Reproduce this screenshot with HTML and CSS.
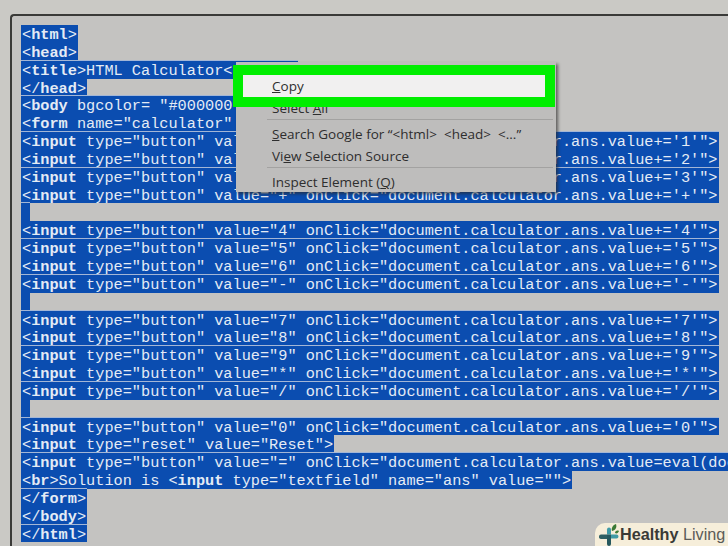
FILE: index.html
```html
<!DOCTYPE html>
<html lang="en">
<head>
<meta charset="utf-8">
<title>HTML Calculator source</title>
<link rel="stylesheet" href="styles.css">
</head>
<body>
<div class="frame">
<div class="code">
<div class="line"><span class="sel">&lt;<b>html</b>&gt;</span></div>
<div class="line"><span class="sel">&lt;<b>head</b>&gt;</span></div>
<div class="line seam"><span class="sel">&lt;<b>title</b>&gt;HTML Calculator&lt;/<b>title</b>&gt;</span></div>
<div class="line"><span class="sel">&lt;/<b>head</b>&gt;</span></div>
<div class="line seam"><span class="sel">&lt;<b>body</b> bgcolor= "#000000" text= "#FFFFFF"&gt;</span></div>
<div class="line"><span class="sel">&lt;<b>form</b> name="calculator" &gt;</span></div>
<div class="line seam"><span class="sel">&lt;<b>input</b> type="button" value="1" onClick="document.calculator.ans.value+='1'"&gt;</span></div>
<div class="line"><span class="sel">&lt;<b>input</b> type="button" value="2" onClick="document.calculator.ans.value+='2'"&gt;</span></div>
<div class="line seam"><span class="sel">&lt;<b>input</b> type="button" value="3" onClick="document.calculator.ans.value+='3'"&gt;</span></div>
<div class="line"><span class="sel">&lt;<b>input</b> type="button" value="+" onClick="document.calculator.ans.value+='+'"&gt;</span></div>
<div class="line seam"><span class="sel blank"></span></div>
<div class="line"><span class="sel">&lt;<b>input</b> type="button" value="4" onClick="document.calculator.ans.value+='4'"&gt;</span></div>
<div class="line seam"><span class="sel">&lt;<b>input</b> type="button" value="5" onClick="document.calculator.ans.value+='5'"&gt;</span></div>
<div class="line"><span class="sel">&lt;<b>input</b> type="button" value="6" onClick="document.calculator.ans.value+='6'"&gt;</span></div>
<div class="line seam"><span class="sel">&lt;<b>input</b> type="button" value="-" onClick="document.calculator.ans.value+='-'"&gt;</span></div>
<div class="line"><span class="sel blank"></span></div>
<div class="line seam"><span class="sel">&lt;<b>input</b> type="button" value="7" onClick="document.calculator.ans.value+='7'"&gt;</span></div>
<div class="line"><span class="sel">&lt;<b>input</b> type="button" value="8" onClick="document.calculator.ans.value+='8'"&gt;</span></div>
<div class="line seam"><span class="sel">&lt;<b>input</b> type="button" value="9" onClick="document.calculator.ans.value+='9'"&gt;</span></div>
<div class="line"><span class="sel">&lt;<b>input</b> type="button" value="*" onClick="document.calculator.ans.value+='*'"&gt;</span></div>
<div class="line seam"><span class="sel">&lt;<b>input</b> type="button" value="/" onClick="document.calculator.ans.value+='/'"&gt;</span></div>
<div class="line"><span class="sel blank"></span></div>
<div class="line seam"><span class="sel">&lt;<b>input</b> type="button" value="0" onClick="document.calculator.ans.value+='0'"&gt;</span></div>
<div class="line"><span class="sel">&lt;<b>input</b> type="reset" value="Reset"&gt;</span></div>
<div class="line seam"><span class="sel">&lt;<b>input</b> type="button" value="=" onClick="document.calculator.ans.value=eval(document.calculator.ans.value)"&gt;</span></div>
<div class="line"><span class="sel">&lt;<b>br</b>&gt;Solution is &lt;<b>input</b> type="textfield" name="ans" value=""&gt;</span></div>
<div class="line seam"><span class="sel">&lt;/<b>form</b>&gt;</span></div>
<div class="line"><span class="sel">&lt;/<b>body</b>&gt;</span></div>
<div class="line seam"><span class="sel">&lt;/<b>html</b>&gt;</span></div>
</div>
</div>

<div class="menu">
  <div class="item active"><u>C</u>opy</div>
  <div class="item">Select <u>A</u>ll</div>
  <div class="sep"></div>
  <div class="item"><u>S</u>earch Google for “&lt;html&gt;  &lt;head&gt;  &lt;...”</div>
  <div class="item">Vi<u>e</u>w Selection Source</div>
  <div class="sep"></div>
  <div class="item inspect">Inspect Element (<u>Q</u>)</div>
</div>

<div class="badge">
  <svg class="badge-icon" width="20" height="22" viewBox="0 0 20 22" aria-hidden="true">
    <path d="M8 8V5.5a2 2 0 0 1 4 0V8z" fill="#3f9aa6"/>
    <path d="M0 12.5a2 2 0 0 1 2-2h6V15H2a2 2 0 0 1-2-2.5z" fill="#2f5f63"/>
    <path d="M8 7h4v3.5h5.5a2 2 0 0 1 0 4H12v-4H8z" fill="#3f9aa6"/>
    <path d="M8 10.5h4V20a2 2 0 0 1-4 0z" fill="#26585e"/>
    <path d="M13 7c-1-3 1-6 4-7 1 3 0 6-4 7z" fill="#3c7a35"/>
    <path d="M16 9c0-2 2-3 4-2-1 2-2 3-4 2z" fill="#3c7a35"/>
  </svg>
  <span class="brand"><b>Healthy</b> Living</span>
</div>
</body>
</html>
```
FILE: styles.css
```css
html, body {
  margin: 0;
  height: 100%;
}

body {
  width: 728px;
  height: 546px;
  overflow: hidden;
  background: #cac9c5;
  position: relative;
}

.frame {
  box-sizing: border-box;
  height: 532px;
  margin: 14px 0 0 10px;
  padding: 9px 0 0 9px;
  background: #c4c3c1;
  border-top: 2px solid #3a3a38;
  border-left: 2px solid #3a3a38;
  border-top-left-radius: 4px;
  overflow: hidden;
}

.code {
  font-family: "Liberation Mono", "Courier New", monospace;
  font-size: 15.26px;
  color: #e4ebf5;
}

.line {
  height: 17.85px;
  white-space: pre;
}

.sel {
  display: inline-block;
  height: 100%;
  padding: 0 1px;
  vertical-align: top;
  line-height: 20.5px;
  background: #0b4db0;
}

.seam .sel {
  box-shadow: 0 -1px 0 #a3b6d6;
}

.blank {
  width: 7px;
}

.menu {
  position: absolute;
  left: 236px;
  top: 62px;
  width: 320px;
  box-sizing: border-box;
  padding: 13px 0 0;
  background: #bebdbc;
  box-shadow: 2px 2px 3px rgba(40, 40, 40, 0.65);
  font-family: "Open Sans", "Noto Sans", sans-serif;
  font-size: 13.5px;
  color: #2e2e2e;
}

.item {
  height: 22px;
  line-height: 22px;
  margin: 0 11px 0 7px;
  padding-left: 29px;
  white-space: pre;
}

.active {
  background: #f1f0f0;
  outline: 10px solid #00ee00;
}

.sep {
  height: 1px;
  margin: 0 3px 3px 31px;
  background: #a3a2a1;
}

.inspect {
  height: 21px;
  margin-top: 2px;
}

.badge {
  position: absolute;
  right: 0;
  bottom: 0;
  width: 133px;
  height: 23px;
  box-sizing: border-box;
  padding-left: 4px;
  display: flex;
  align-items: center;
  gap: 1px;
  background: #f6eeda;
  border-top-left-radius: 10px;
  overflow: hidden;
}

.badge-icon {
  flex: none;
}

.brand {
  font-family: "Liberation Sans", Arial, sans-serif;
  font-size: 16.2px;
  color: #5c5c58;
  white-space: nowrap;
}

.brand b {
  color: #3a3a36;
}
```
